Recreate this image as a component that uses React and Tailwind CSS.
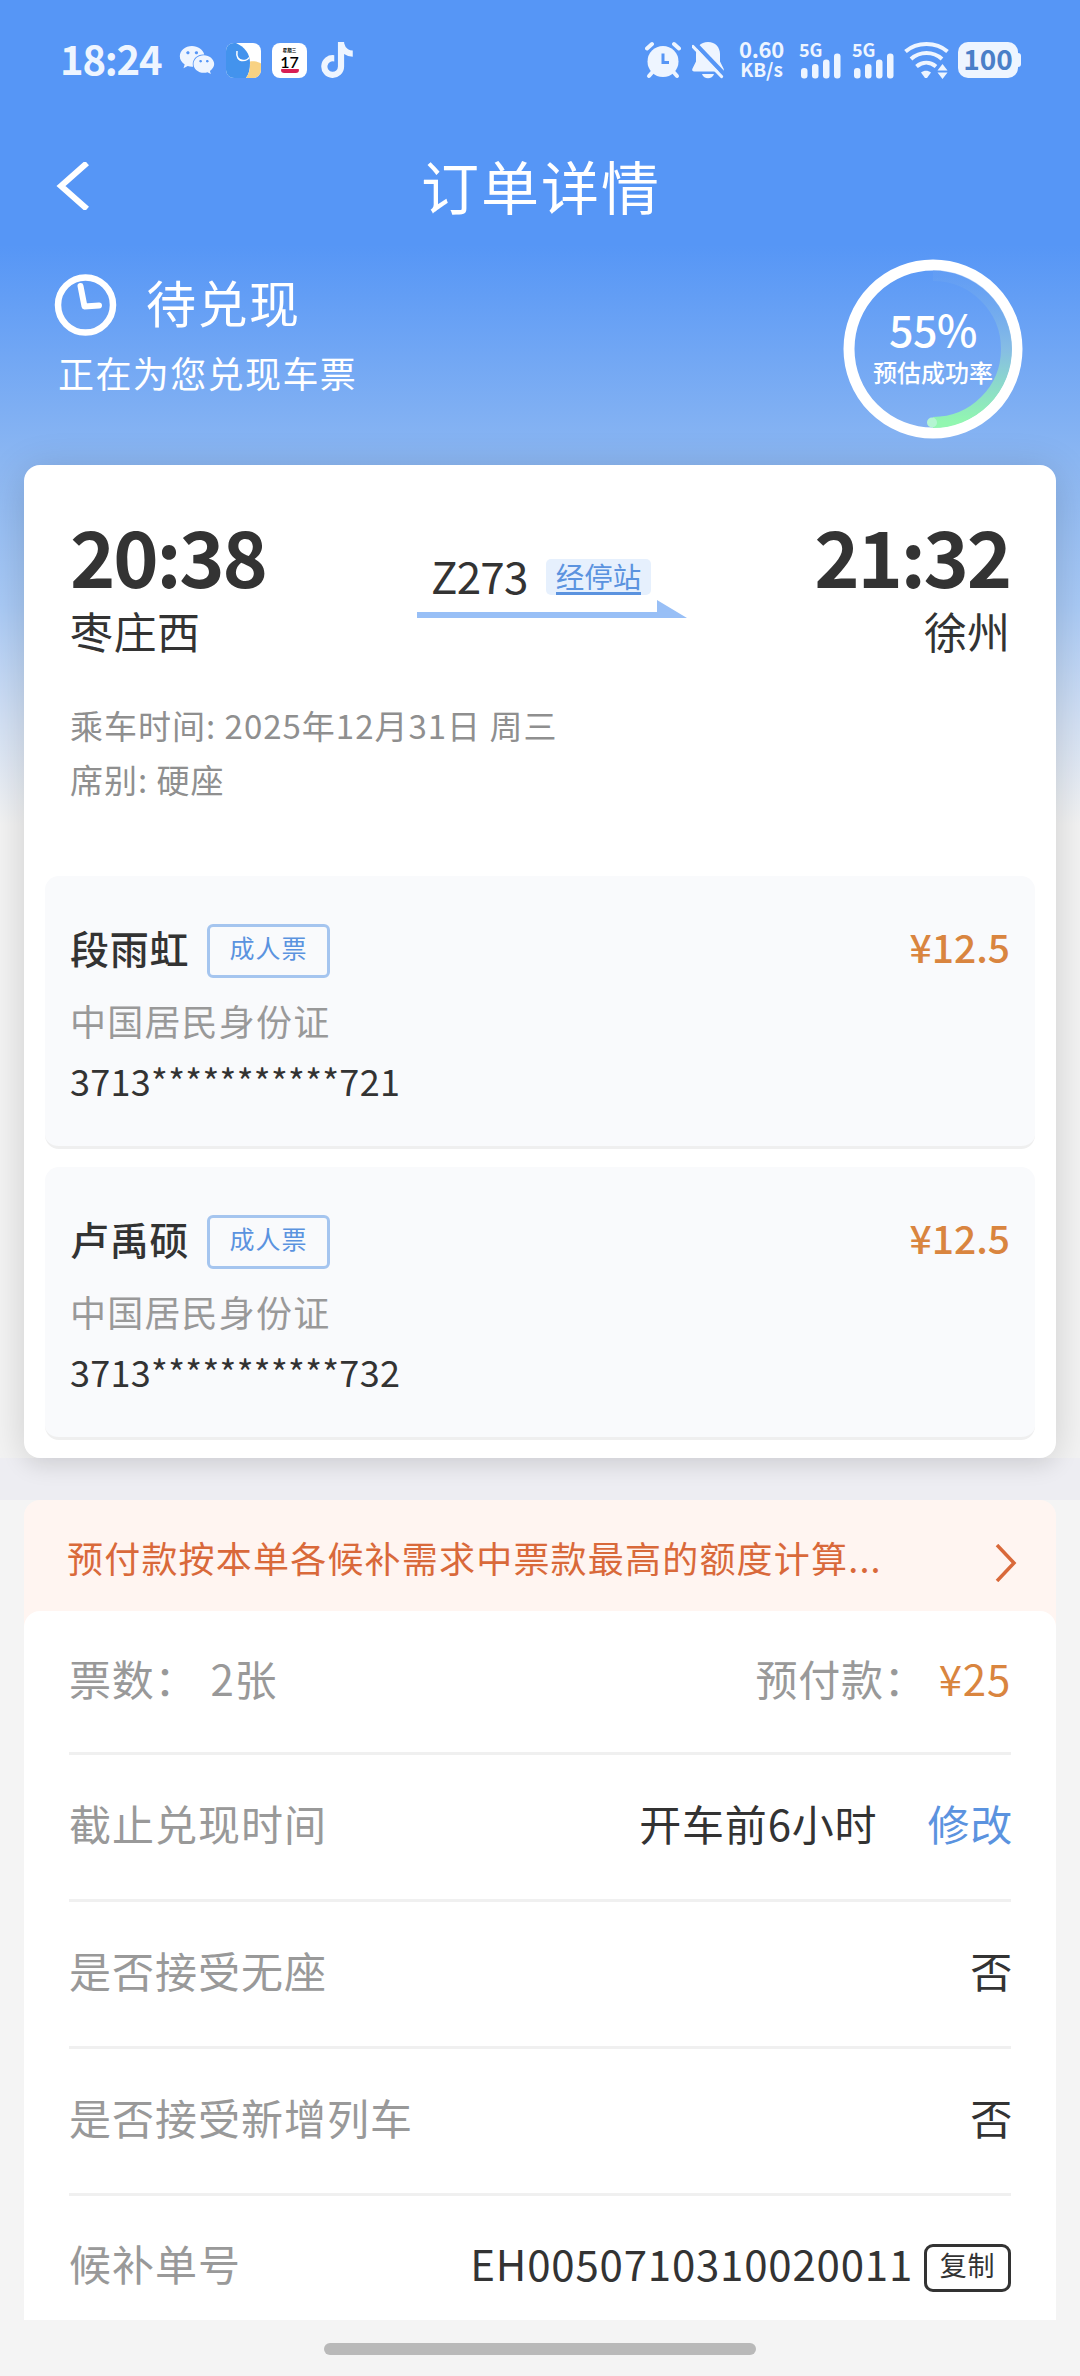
import { FaWeixin, FaTiktok } from 'react-icons/fa6';

const passengers = [
  { name: '段雨虹', id: '3713***********721', price: '¥12.5' },
  { name: '卢禹硕', id: '3713***********732', price: '¥12.5' },
];

function AlarmIcon() {
  return (
    <svg className="w-9 h-[38px]" viewBox="0 0 36 38" fill="none" stroke="currentColor" strokeLinecap="round">
      <path d="M2 7.5 7 3M34 7.5 29 3" strokeWidth="4" />
      <path d="m7.500 31-3.500 4M28.500 31l3.500 4" strokeWidth="4" />
      <circle cx="18" cy="20.500" r="15.500" fill="currentColor" stroke="none" />
      <path d="M18 12.500V21.500h6" stroke="#5696f6" strokeWidth="3" strokeLinecap="butt" />
    </svg>
  );
}

function BellOffIcon() {
  return (
    <svg className="w-8 h-[38px]" viewBox="0 0 32 38" fill="currentColor">
      <path d="M16 1C8.500 1 4 6.500 4 13v7.500L0.500 27.500c-.8 1.800 0 3 1.500 3h28c1.500 0 2.300-1.200 1.500-3L28 20.500V13C28 6.500 23.500 1 16 1z" />
      <path d="M10 33h12c-1.200 3-3.200 4.200-6 4.200S11.200 36 10 33z" />
      <path d="M2.500 2 34 35" stroke="#5696f6" strokeWidth="4.500" />
      <path d="M1 5.500 29.500 35.500" stroke="currentColor" strokeWidth="3.200" strokeLinecap="round" />
    </svg>
  );
}

function Signal() {
  return (
    <div className="flex flex-col w-[43px] h-[38px]">
      <span className="text-[18px] leading-[16px] h-[11px] font-bold">5G</span>
      <svg className="w-[43px] h-[27px]" viewBox="0 0 43 27" fill="currentColor">
        <rect x="2" y="16" width="6.500" height="10.500" rx="3" />
        <rect x="13" y="12" width="6.500" height="14.500" rx="3" />
        <rect x="24" y="7.500" width="6.500" height="19" rx="3" />
        <rect x="35" y="1.500" width="6.500" height="25" rx="3" />
      </svg>
    </div>
  );
}

function WifiIcon() {
  return (
    <svg className="w-[45px] h-[38px]" viewBox="0 0 45 38" fill="none" stroke="currentColor" strokeWidth="4">
      <path d="M1.500 10.500C13 .5 32 .5 43.500 10.500" />
      <path d="M7 18c9-8 22-8 31 0" />
      <path d="M12.500 25.500c6-5 13.500-5 19.500 0" />
      <path d="M17 31.500c3-2.300 7-2.300 10 0l-4 5.500h-2z" fill="currentColor" stroke="none" />
      <path d="M33.500 29.500h10l-5-6.500zM33.500 31.500h10l-5 6.500z" fill="currentColor" stroke="none" />
    </svg>
  );
}

function StatusBar() {
  return (
    <div className="h-[120px] flex items-center text-[#eef5ff]">
      <span className="ml-[60px] w-[118px] mb-[5px] text-[40px] leading-[38px] font-bold tracking-[-1.200px]">18:24</span>
      <FaWeixin className="w-9 h-9 ml-px" />
      <svg className="w-[35px] h-[35px] ml-[11px]" viewBox="0 0 35 35">
        <rect width="35" height="35" rx="8" fill="#fff" />
        <path d="M8 0h2c9 4 14 11 14 20 0 6-1 11-4 15H8a8 8 0 0 1-8-8V8a8 8 0 0 1 8-8z" fill="#4393ed" />
        <path d="M24 18.500c5-1 9 1 11 2V27a8 8 0 0 1-8 8h-7c3-4 4.500-9 4-16.500z" fill="#f8d283" />
        <path d="M11 8c-1 6 1.500 9.500 6 9.500 3 0 5-1 6-3" fill="none" stroke="#fff" strokeWidth="1.500" />
      </svg>
      <div className="w-[35px] h-[35px] ml-[11px] rounded-[8px] bg-white text-black flex flex-col items-center">
        <span className="text-[4.500px] leading-[6px] mt-[4px] h-[6px] font-bold">星期三</span>
        <span className="text-[16px] leading-[15px] h-[15px] mt-px font-semibold font-[Lato]">17</span>
        <span className="w-[18px] h-[4px] rounded-b-[4px] rounded-t-[1px] bg-[#d81e54]" />
      </div>
      <FaTiktok className="w-8 h-9 ml-[14px]" />
      <div className="ml-auto mr-[59px] flex items-center">
        <AlarmIcon />
        <div className="ml-[11px]"><BellOffIcon /></div>
        <div className="ml-[14px] w-[47px] mb-[3px] flex flex-col items-center font-bold">
          <div className="text-[22px] leading-[20px] tracking-[-0.3px]">0.60</div>
          <div className="text-[19px] leading-[22px]">KB/s</div>
        </div>
        <div className="ml-[14px]"><Signal /></div>
        <div className="ml-[10px]"><Signal /></div>
        <div className="ml-[9px]"><WifiIcon /></div>
        <div className="ml-[9px] w-[60px] h-9 rounded-[10px] bg-current flex items-center justify-center">
          <span className="text-[28px] leading-[32px] mb-[4px] font-bold text-[#4a7fc8]">100</span>
        </div>
        <div className="w-[3px] h-[14px] rounded-r-[3px] bg-current" />
      </div>
    </div>
  );
}

function SuccessRing() {
  return (
    <div className="w-[180px] h-[180px] grid">
      <svg className="col-start-1 row-start-1" viewBox="0 0 180 180" fill="none">
        <defs>
          <linearGradient id="arc" x1="0" y1="0" x2="0" y2="1">
            <stop offset="0" stopColor="#6aa2f2" stopOpacity="0.4" />
            <stop offset="0.5" stopColor="#86bde4" />
            <stop offset="1" stopColor="#92f7b0" />
          </linearGradient>
        </defs>
        <circle cx="90" cy="90" r="84" stroke="#fff" strokeWidth="11" />
        <path d="M90 16.500a73.500 73.500 0 0 1 0 147" stroke="url(#arc)" strokeWidth="11" />
        <circle cx="89" cy="163.500" r="5" fill="#b4f5d2" />
      </svg>
      <div className="col-start-1 row-start-1 text-center text-white pt-[41px]">
        <div className="text-[43px] leading-[56px] font-medium tracking-[-0.5px]">55%</div>
        <div className="text-[24px] leading-[32px] font-medium whitespace-nowrap">预估成功率</div>
      </div>
    </div>
  );
}

function TripCard() {
  return (
    <div className="mx-6 h-[993px] rounded-[16px] bg-white px-[21px] shadow-[0_6px_40px_rgba(0,0,0,0.16)]">
      <div className="h-[411px] px-[25px] pt-[52px] text-[#333]">
        <div className="flex justify-between">
          <div>
            <div className="text-[77px] leading-[76px] font-bold tracking-[-2.200px]">20:38</div>
            <div className="mt-[4px] text-[43px] leading-[66px] tracking-[0.5px]">枣庄西</div>
          </div>
          <div className="w-[270px] ml-6 pt-[35px]">
            <div className="flex items-center h-[53px]">
              <span className="ml-[14px] w-[115px] mb-[8px] text-[44px] leading-[44px] tracking-[-0.8px]">Z273</span>
              <span className="w-[105px] h-9 mb-[3px] rounded-[5px] bg-[#e6f0fd] flex justify-center">
                <span className="h-9 text-[28.500px] leading-[33px] text-[#5b93df] border-b-[3px] border-[#5b93df]">经停站</span>
              </span>
            </div>
            <svg className="w-[270px] h-[18px] -mt-[5px]" viewBox="0 0 270 18" fill="#98bff6">
              <path d="M0 12h240V0l30 18H0z" />
            </svg>
          </div>
          <div className="text-right">
            <div className="text-[77px] leading-[76px] font-bold tracking-[-2.200px]">21:32</div>
            <div className="mt-[4px] text-[43px] leading-[66px]">徐州</div>
          </div>
        </div>
        <div className="mt-[35px] text-[33px] leading-[54px] text-[#8f8f8f] tracking-[1px]">
          <div>乘车时间: 2025年12月31日 周三</div>
          <div>席别: 硬座</div>
        </div>
      </div>
      <div className="flex flex-col gap-[18px]">
        {passengers.map((p) => (
          <div key={p.name} className="h-[273px] rounded-[14px] bg-[#f9fafc] border-b-[3px] border-[#efefef] px-[25px] pt-[48px]">
            <div className="flex items-center h-[54px]">
              <span className="w-[137px] mb-[9px] text-[39px] leading-[48px] font-medium text-[#333] tracking-[0.8px]">{p.name}</span>
              <span className="w-[123px] h-[54px] rounded-[6px] border-3 border-[#a5c5ef] text-center text-[25px] leading-[41px] tracking-[1px] text-[#5b93df]">成人票</span>
              <span className="ml-auto mb-[10px] text-[39px] leading-[48px] font-medium text-[#d9853f]">{p.price}</span>
            </div>
            <div className="mt-[12px] text-[36px] leading-[60px] text-[#999] tracking-[1.200px]">中国居民身份证</div>
            <div className="text-[36px] leading-[60px] text-[#333] tracking-[0.3px]">{p.id}</div>
          </div>
        ))}
      </div>
    </div>
  );
}

function Row({ label, children }) {
  return (
    <div className="h-[147px] pb-[9px] border-t-3 border-[#f0f0f0] flex items-center justify-between">
      <span className="text-[#999] tracking-[1px]">{label}</span>
      <span className="-mr-[2px] text-[#333] flex items-center">{children}</span>
    </div>
  );
}

function OrderInfo() {
  return (
    <div className="mx-6 h-[820px] bg-[#fff5f1] rounded-t-[16px] flex flex-col">
      <div className="h-[111px] pl-[43px] pr-[39px] flex items-center justify-between text-[#d9693a]">
        <span className="mt-[2px] text-[36px] leading-[60px] tracking-[1.200px]">预付款按本单各候补需求中票款最高的额度计算...</span>
        <svg className="w-[22px] h-[38px] mt-[14px]" viewBox="0 0 22 38" fill="none" stroke="currentColor" strokeWidth="3.500">
          <path d="M2 1l17 18L2 37" />
        </svg>
      </div>
      <div className="flex-1 rounded-t-[16px] bg-white px-[45px] text-[42px] leading-[60px] tracking-[0.8px]">
        <div className="h-[141px] pb-[7px] flex items-center justify-between text-[#999]">
          <span>票数：<span className="ml-[13px]">2张</span></span>
          <span>预付款：<span className="ml-3 text-[#d9853f]">¥25</span></span>
        </div>
        <Row label="截止兑现时间">
          开车前6小时<span className="ml-[50px] text-[#5b93df]">修改</span>
        </Row>
        <Row label="是否接受无座">否</Row>
        <Row label="是否接受新增列车">否</Row>
        <div className="h-[127px] border-t-3 border-[#f0f0f0] pt-[37px] flex items-start justify-between">
          <span className="text-[#999] tracking-[1px]">候补单号</span>
          <span className="text-[#333] flex items-start">
            EH0050710310020011
            <span className="ml-[11px] mt-[11px] w-[87px] h-12 rounded-[9px] border-3 border-[#333] text-[27px] leading-[36px] text-center">复制</span>
          </span>
        </div>
      </div>
    </div>
  );
}

export default function App() {
  return (
    <div
      className="w-[1080px] h-[2376px] overflow-hidden bg-[#f4f4f4]"
      style={{ fontFamily: '"Noto Sans CJK SC", "Noto Sans", sans-serif' }}
    >
      <div className="h-[1458px] bg-[linear-gradient(180deg,#5696f6_0px,#5696f6_245px,#8cb7f2_465px,#a9caf6_605px,#d3e1f5_720px,#f4f4f4_825px)]">
        <StatusBar />
        <div className="h-[136px] flex items-center text-white">
          <svg className="ml-[55px] w-[35px] h-12 -mt-1" viewBox="0 0 35 48" fill="none" stroke="currentColor" strokeWidth="6">
            <path d="M32 1 6 24 32 47" />
          </svg>
          <h1 className="flex-1 pr-[88px] text-center text-[58px] leading-[80px] tracking-[2px] mb-[6px]">订单详情</h1>
        </div>
        <div className="h-[209px] pl-[54px] pr-[57px] flex justify-between text-white">
          <div>
            <div className="flex items-center pt-[18px]">
              <svg className="w-[63px] h-[62px]" viewBox="0 0 63 62" fill="none" stroke="currentColor">
                <circle cx="31.500" cy="31" r="27.500" strokeWidth="6.500" />
                <path d="M26.500 12l4 20.500 14.500-1" strokeWidth="6" strokeLinecap="round" strokeLinejoin="round" />
              </svg>
              <span className="ml-[29px] text-[50px] leading-[62px] tracking-[1.500px] -mt-2">待兑现</span>
            </div>
            <div className="pl-1 text-[36px] leading-[60px] tracking-[1.400px] mt-[6px]">正在为您兑现车票</div>
          </div>
          <div className="pt-[3px]"><SuccessRing /></div>
        </div>
        <TripCard />
      </div>
      <div className="h-[42px] overflow-hidden bg-[#ededf2]">
        <div className="mx-6 h-10 -mt-10 rounded-[16px] shadow-[0_6px_24px_rgba(0,0,0,0.14)]" />
      </div>
      <OrderInfo />
      <div className="h-[56px] pt-[23px]">
        <div className="mx-auto w-[432px] h-3 rounded-full bg-[#b9b9b9]" />
      </div>
    </div>
  );
}
